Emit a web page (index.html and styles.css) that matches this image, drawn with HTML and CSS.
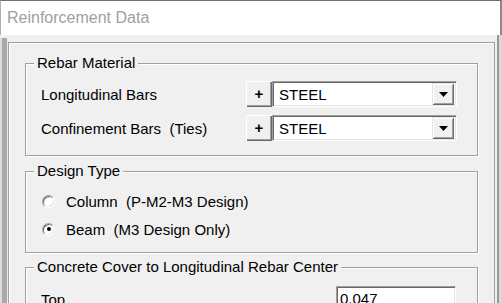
FILE: index.html
```html
<!DOCTYPE html>
<html>
<head>
<meta charset="utf-8">
<link rel="stylesheet" href="styles.css">
</head>
<body>
<div class="window">
  <div class="titlebar">Reinforcement Data</div>
  <div class="client">
    <div class="lstrip"></div>
    <div class="frame">
      <fieldset class="group g-material">
        <legend>Rebar Material</legend>
        <div class="rows">
          <div class="row">
            <span class="label">Longitudinal Bars</span>
            <span class="plus">+</span>
            <div class="combo"><span class="combo-text">STEEL</span><span class="drop"><svg width="9" height="5" viewBox="0 0 9 5"><polygon points="0,0 9,0 4.5,5" fill="#000"/></svg></span></div>
          </div>
          <div class="row">
            <span class="label">Confinement Bars  (Ties)</span>
            <span class="plus">+</span>
            <div class="combo"><span class="combo-text">STEEL</span><span class="drop"><svg width="9" height="5" viewBox="0 0 9 5"><polygon points="0,0 9,0 4.5,5" fill="#000"/></svg></span></div>
          </div>
        </div>
      </fieldset>
      <fieldset class="group g-design">
        <legend>Design Type</legend>
        <div class="radios">
          <div class="radio-row"><span class="radio"></span><span class="label">Column  (P-M2-M3 Design)</span></div>
          <div class="radio-row"><span class="radio checked"></span><span class="label">Beam  (M3 Design Only)</span></div>
        </div>
      </fieldset>
      <fieldset class="group g-cover">
        <legend>Concrete Cover to Longitudinal Rebar Center</legend>
        <div class="rows cover-rows">
          <div class="row">
            <span class="label">Top</span>
            <div class="field">0.047</div>
          </div>
        </div>
      </fieldset>
    </div>
    <div class="rstrip"></div>
  </div>
</div>
</body>
</html>
```

FILE: styles.css
```css
* { box-sizing: border-box; }
html, body {
  margin: 0;
  padding: 0;
}
body {
  width: 502px;
  height: 303px;
  overflow: hidden;
  background: #f0f0f0;
  font-family: "Liberation Sans", Arial, sans-serif;
  font-size: 15px;
  color: #000;
}
.window {
  display: flex;
  flex-direction: column;
  height: 303px;
}
.titlebar {
  flex: none;
  height: 35px;
  background: #fff;
  border-top: 1px solid #6f6f6f;
  border-left: 1px solid #b0b0b0;
  border-right: 2px solid #8a8a8a;
  padding: 8px 0 0 6px;
  font-size: 16px;
  line-height: 18px;
  color: #a0a0a0;
}
.client {
  flex: 1;
  display: flex;
  min-height: 0;
}
.lstrip {
  flex: none;
  width: 8px;
  margin-top: 3px;
  background: linear-gradient(to right, #dcdcdc 0 2px, #a9a9a9 2px 7px, #ececec 7px 8px);
}
.frame {
  flex: none;
  width: 487px;
  margin-top: 7px;
  border: 1px solid #a0a0a0;
  border-bottom: none;
  box-shadow: inset 1px 1px 0 #fff, 1px 0 0 #fff;
  padding: 12px 16px 0 16px;
  display: flex;
  flex-direction: column;
}
.rstrip {
  flex: none;
  width: 7px;
  background: linear-gradient(to right, #f0f0f0 0 2px, #9a9a9a 2px 4px, #d8d8d8 4px 7px);
}
.group {
  margin: 0;
  padding: 0;
  min-width: 0;
  border: 1px solid #a0a0a0;
  box-shadow: inset 1px 1px 0 #fff, 1px 1px 0 #fff;
}
.group legend {
  margin-left: 8px;
  padding: 0 3px;
  line-height: 16px;
  background: #f0f0f0;
}
.g-design { margin-top: 7px; }
.g-cover { margin-top: 6px; }

.rows {
  display: flex;
  flex-direction: column;
  gap: 8px;
  padding: 10px 20px 14px 15px;
}
.cover-rows { padding-top: 11px; padding-right: 21px; }
.row {
  display: flex;
  align-items: center;
  height: 26px;
}
.label {
  flex: 1;
  white-space: pre;
  line-height: 17px;
}
.plus {
  flex: none;
  width: 26px;
  height: 26px;
  background: #f0f0f0;
  box-shadow: inset 1px 1px 0 #fff, inset -1px -1px 0 #696969, inset -2px -2px 0 #a0a0a0;
  display: flex;
  align-items: center;
  justify-content: center;
  font-weight: bold;
  font-size: 15px;
  padding-bottom: 2px;
}
.combo {
  flex: none;
  width: 185px;
  height: 26px;
  background: #fff;
  border: 1px solid;
  border-color: #a0a0a0 #fff #fff #a0a0a0;
  box-shadow: inset 1px 1px 0 #696969, inset -1px -1px 0 #e3e3e3;
  display: flex;
  align-items: center;
  padding: 2px 2px 2px 6px;
}
.combo-text {
  flex: 1;
  line-height: 17px;
}
.drop {
  flex: none;
  width: 22px;
  height: 22px;
  background: #f0f0f0;
  box-shadow: inset 1px 1px 0 #e3e3e3, inset -1px -1px 0 #696969, inset 2px 2px 0 #fff, inset -2px -2px 0 #a0a0a0;
  display: flex;
  align-items: center;
  justify-content: center;
}
.drop svg { display: block; }

.radios {
  display: flex;
  flex-direction: column;
  gap: 8px;
  padding: 12px 20px 13px 16px;
}
.radio-row {
  display: flex;
  align-items: center;
  height: 20px;
}
.radio-row .label { flex: none; }
.radio {
  flex: none;
  width: 13px;
  height: 13px;
  margin-right: 11px;
  border-radius: 50%;
  background: #fff;
  border: 1px solid;
  border-color: #a0a0a0 #fff #fff #a0a0a0;
  box-shadow: inset 1px 1px 0 #696969, inset -1px -1px 0 #e3e3e3;
  display: flex;
  align-items: center;
  justify-content: center;
}
.radio.checked::after {
  content: "";
  width: 4px;
  height: 4px;
  border-radius: 50%;
  background: #000;
}
.field {
  flex: none;
  width: 120px;
  height: 26px;
  background: #fff;
  border: 1px solid;
  border-color: #a0a0a0 #fff #fff #a0a0a0;
  box-shadow: inset 1px 1px 0 #696969, inset -1px -1px 0 #e3e3e3;
  padding: 3px 0 0 3px;
  line-height: 17px;
}
```
